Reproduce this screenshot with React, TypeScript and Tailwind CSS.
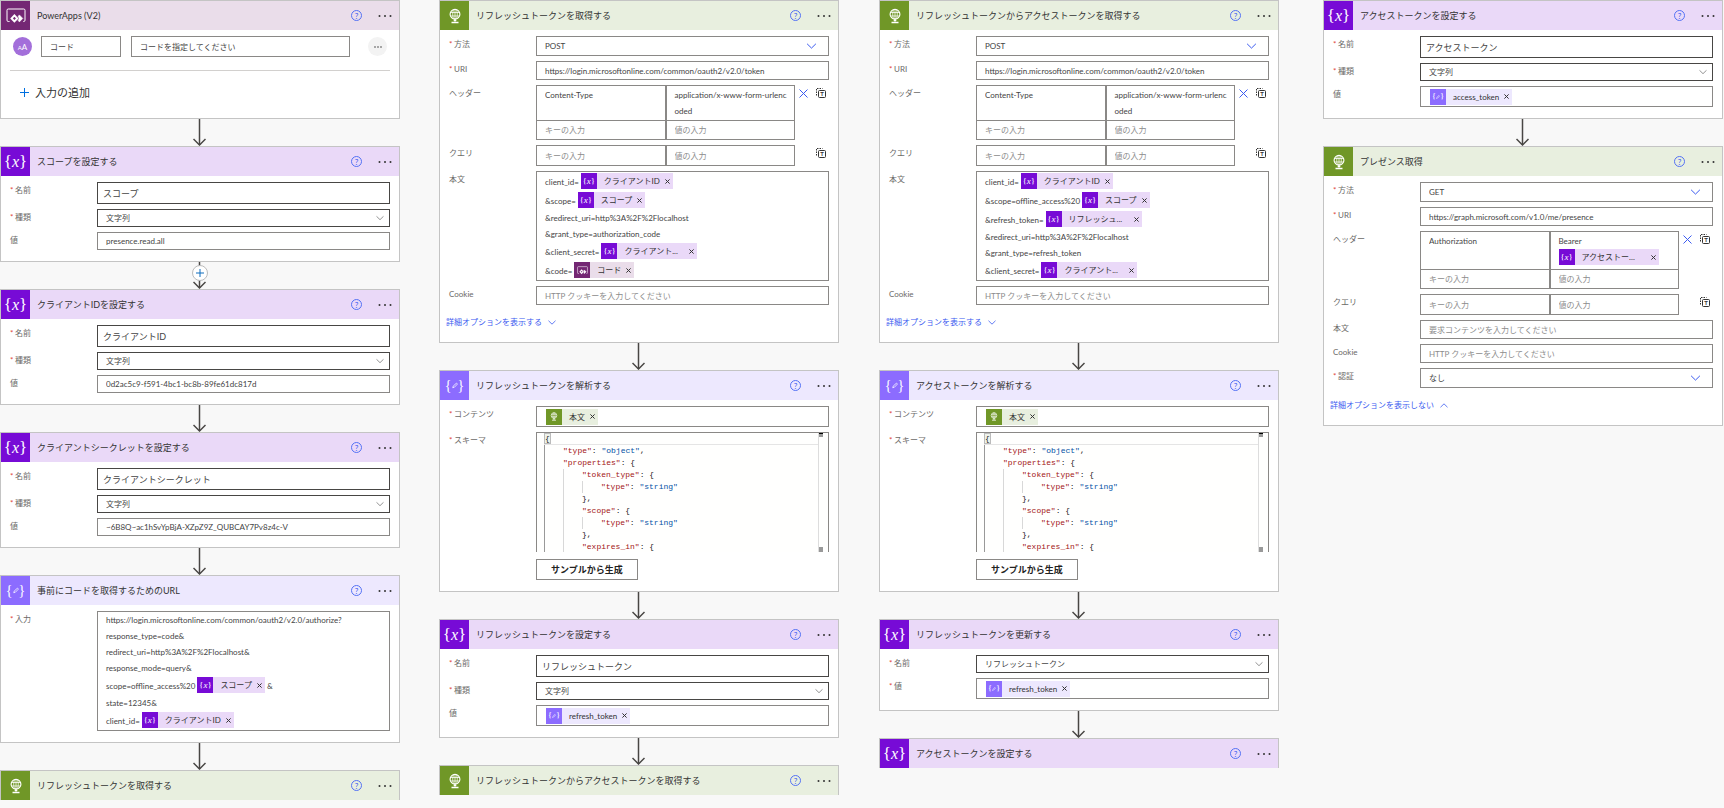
import { useId } from 'react';
import type { ReactNode } from 'react';
import { clsx } from 'clsx';

type Kind = 'powerapps' | 'variable' | 'data' | 'http';

const iconBg: Record<Kind, string> = {
  powerapps: 'bg-[#742774]',
  variable: 'bg-[#770bd6]',
  data: 'bg-[#8c6cff]',
  http: 'bg-[#709727]',
};

const headerBg: Record<Kind, string> = {
  powerapps: 'bg-[#eaddea]',
  variable: 'bg-[#ead9f8]',
  data: 'bg-[#ede8fe]',
  http: 'bg-[#e8efdf]',
};

const fieldText = 'text-[8px] text-[#444] outline-none placeholder:text-[#8c8c8c]';

function Glyph({ kind, small }: { kind: Kind; small?: boolean }) {
  const brace = clsx("font-['Liberation_Serif',serif] leading-none", small ? 'text-[9px]' : 'text-[17px]');

  if (kind === 'variable') {
    return (
      <span className={clsx(brace, 'flex items-center')}>
        {'{'}
        <i className={small ? 'text-[9px]' : 'text-[16px]'}>x</i>
        {'}'}
      </span>
    );
  }
  if (kind === 'data') {
    return (
      <span className={clsx(brace, 'flex items-center')}>
        {small ? '{' : <span className="text-[14px]">{'{'}</span>}
        <svg viewBox="0 0 8 8" className={small ? 'w-1 h-1' : 'w-[6px] h-[7px]'} fill="none" stroke="currentColor">
          <path d="M1 7l.6-2.2L6 .8l1.3 1.3-4.2 4.3z" />
        </svg>
        {small ? '}' : <span className="text-[14px]">{'}'}</span>}
      </span>
    );
  }
  if (kind === 'http') {
    return (
      <svg viewBox="0 0 16 18" className={small ? 'w-2 h-[9px]' : 'w-[14px] h-4'} fill="none" stroke="currentColor">
        <circle cx="8" cy="7" r="5.6" strokeWidth="1.3" />
        <ellipse cx="8" cy="7" rx="2.6" ry="5.6" strokeWidth="0.9" />
        <path d="M3 5h10M3 9h10M8 1.4v15" strokeWidth="0.9" />
        <path d="M4 16.4h8M6.5 14h3" strokeWidth="1.5" />
      </svg>
    );
  }
  return (
    <svg viewBox="0 0 20 16" className={small ? 'w-[11px] h-[9px]' : 'w-5 h-4'} fill="none" stroke="currentColor">
      <path d="M3.5 13.5H2.3A1.3 1.3 0 0 1 1 12.2V2.3A1.3 1.3 0 0 1 2.3 1h15.4A1.3 1.3 0 0 1 19 2.3v9.9a1.3 1.3 0 0 1-1.3 1.3h-.5" />
      <path d="M8.4 7.4l2.8 3-2.8 3-2.8-3z" strokeWidth="2" />
      <path d="M13.4 6.9l3.4 3.5-3.4 3.5-1.3-1.3 1-2.2-1-2.2z" fill="currentColor" strokeWidth="0.5" />
    </svg>
  );
}

function Chevron({ className, up }: { className?: string; up?: boolean }) {
  return (
    <svg viewBox="0 0 10 6" className={className} fill="none" stroke="currentColor">
      <path d={up ? 'M.6 5.2L5 .9l4.4 4.3' : 'M.6.8L5 5.1 9.4.8'} />
    </svg>
  );
}

function Card({ kind, title, children }: { kind: Kind; title: string; children?: ReactNode }) {
  return (
    <section className={clsx('border border-[#c4c4c4] bg-white', !children && 'border-b-0')}>
      <header className={clsx('flex items-center h-[29px]', headerBg[kind])}>
        <span className={clsx('flex items-center justify-center w-[29px] h-[29px] text-white', iconBg[kind])}>
          <Glyph kind={kind} />
        </span>
        <h2 className="flex-1 pl-[7px] text-[9px] leading-4 text-[#333]">{title}</h2>
        <button
          aria-label="ヘルプ"
          className="flex items-center justify-center w-[11px] h-[11px] rounded-full border border-[#5472f5] text-[8px] leading-none text-[#3b5bf0]"
        >
          ?
        </button>
        <button aria-label="メニュー" className="ml-4 mr-[7px] text-[#333]">
          <svg viewBox="0 0 14 4" className="w-[14px] h-1" fill="currentColor">
            <circle cx="1.5" cy="2" r="1" />
            <circle cx="7" cy="2" r="1" />
            <circle cx="12.5" cy="2" r="1" />
          </svg>
        </button>
      </header>
      {children}
    </section>
  );
}

function Fields({ children }: { children: ReactNode }) {
  return <div className="flex flex-col gap-[5px] pt-[6px] pb-[11px] pr-[9px]">{children}</div>;
}

function Row({ id, label, required, children }: { id?: string; label: string; required?: boolean; children: ReactNode }) {
  return (
    <div className="flex items-start">
      <label htmlFor={id} className="flex w-24 shrink-0 pl-[9px] text-[8px] leading-4 text-[#6b6967]">
        {required && <span className="w-[5px] text-[#e0433a]">*</span>}
        {label}
      </label>
      <div className="flex-1 min-w-0">{children}</div>
    </div>
  );
}

function NameField({ value }: { value: string }) {
  const id = useId();
  return (
    <Row id={id} label="名前" required>
      <input
        id={id}
        defaultValue={value}
        className="block w-full h-[22px] px-[5px] border border-[#484644] text-[9px] text-[#444] outline-none"
      />
    </Row>
  );
}

function TextField({ label, value, placeholder, required, tall }: {
  label: string;
  value?: string;
  placeholder?: string;
  required?: boolean;
  tall?: boolean;
}) {
  const id = useId();
  return (
    <Row id={id} label={label} required={required}>
      <input
        id={id}
        defaultValue={value}
        placeholder={placeholder}
        className={clsx('block w-full px-2 border border-[#8a8886]', fieldText, tall ? 'h-[19px]' : 'h-[18px]')}
      />
    </Row>
  );
}

function SelectField({ label, value, accent }: { label: string; value: string; accent?: boolean }) {
  const id = useId();
  return (
    <Row id={id} label={label} required>
      <div className="relative">
        <select
          id={id}
          defaultValue={value}
          className={clsx(
            'block w-full px-2 border appearance-none',
            fieldText,
            accent ? 'h-5 border-[#8a8886]' : 'h-[18px] border-[#484644]',
          )}
        >
          <option>{value}</option>
        </select>
        <Chevron
          className={clsx(
            'absolute top-1/2 -translate-y-1/2 pointer-events-none',
            accent ? 'right-3 w-[11px] h-[6px] text-[#3b5bf0]' : 'right-[6px] w-2 h-[5px] text-[#777]',
          )}
        />
      </div>
    </Row>
  );
}

function Chip({ kind, label, className }: { kind: Kind; label: string; className?: string }) {
  return (
    <span className={clsx('inline-flex items-center h-4 text-[8px] leading-4 text-[#333]', headerBg[kind])}>
      <span className={clsx('flex items-center justify-center w-4 h-4 mr-[7px] text-white', iconBg[kind])}>
        <Glyph kind={kind} small />
      </span>
      <span className={className}>{label}</span>
      <button aria-label={`${label} を削除`} className="ml-[5px] mr-[3px]">
        <svg viewBox="0 0 5 5" className="w-[5px] h-[5px]" stroke="currentColor">
          <path d="M.4.4l4.2 4.2M4.6.4L.4 4.6" />
        </svg>
      </button>
    </span>
  );
}

function ChipField({ label, required, children }: { label: string; required?: boolean; children: ReactNode }) {
  return (
    <Row label={label} required={required}>
      <div className="flex items-center h-[21px] px-[9px] border border-[#8a8886]">{children}</div>
    </Row>
  );
}

function BodyField({ label, required, children }: { label: string; required?: boolean; children: ReactNode }) {
  return (
    <Row label={label} required={required}>
      <div className="px-2 border border-[#8a8886] text-[8px] text-[#444]">{children}</div>
    </Row>
  );
}

function Line({ text, chip, after }: { text: string; chip?: ReactNode; after?: string }) {
  if (!chip) return <p className="leading-4">{text}</p>;
  return (
    <p className="flex items-start h-[19px] pt-px gap-[2px] leading-[18px]">
      <span>{text}</span>
      {chip}
      {after && <span>{after}</span>}
    </p>
  );
}

function PairField({ label, name, children }: { label: string; name?: string; children?: ReactNode }) {
  return (
    <Row label={label}>
      <div className="flex items-start">
        <div className="grid grid-cols-2 flex-1 border border-[#8a8886]">
          {name && (
            <>
              <div className="border-r border-[#8a8886]">
                <input aria-label="キー" defaultValue={name} className={clsx('block w-full h-[18px] px-2', fieldText)} />
              </div>
              <div className="border-l border-[#8a8886] text-[8px]">{children}</div>
            </>
          )}
          <input
            aria-label="キーの入力"
            placeholder="キーの入力"
            className={clsx('block w-full h-[19px] px-2 border-r border-[#8a8886]', fieldText, name && 'border-t')}
          />
          <input
            aria-label="値の入力"
            placeholder="値の入力"
            className={clsx('block w-full h-[19px] px-2 border-l border-[#8a8886]', fieldText, name && 'border-t')}
          />
        </div>
        <div className="flex items-center justify-end gap-2 w-[34px] pt-[3px] pr-[3px]">
          {name && (
            <button aria-label="削除" className="text-[#3b5bf0]">
              <svg viewBox="0 0 9 9" className="w-[9px] h-[9px]" stroke="currentColor">
                <path d="M.5.5l8 8M8.5.5l-8 8" />
              </svg>
            </button>
          )}
          <button aria-label="テキスト モードに切り替える" className="text-[#333]">
            <svg viewBox="0 0 10 10" className="w-[10px] h-[10px]" fill="none" stroke="currentColor">
              <path d="M.5 7.5v-7h6" strokeDasharray="1.5 1" />
              <rect x="2.5" y="2.5" width="7" height="7" rx="1" />
              <text x="6" y="8.4" textAnchor="middle" fontSize="6" fontWeight="bold" fill="currentColor" stroke="none">
                T
              </text>
            </svg>
          </button>
        </div>
      </div>
    </Row>
  );
}

function AdvancedLink({ open }: { open?: boolean }) {
  return (
    <div className="flex items-end h-[21px] pl-[6px]">
      <a href="#advanced" className="flex items-center gap-[6px] text-[8px] leading-[18px] text-[#3b5bf0]">
        {open ? '詳細オプションを表示しない' : '詳細オプションを表示する'}
        <Chevron className="w-2 h-[5px]" up={open} />
      </a>
    </div>
  );
}

const schema: { indent: number; name?: string; value?: string; end: string }[] = [
  { indent: 1, name: 'type', value: 'object', end: ',' },
  { indent: 1, name: 'properties', end: '{' },
  { indent: 2, name: 'token_type', end: '{' },
  { indent: 3, name: 'type', value: 'string', end: '' },
  { indent: 2, end: '},' },
  { indent: 2, name: 'scope', end: '{' },
  { indent: 3, name: 'type', value: 'string', end: '' },
  { indent: 2, end: '},' },
  { indent: 2, name: 'expires_in', end: '{' },
];

function SchemaField() {
  return (
    <>
      <Row label="スキーマ" required>
        <div className="flex h-[120px] overflow-hidden border border-b-0 border-[#8a8886] bg-[#fffffe]">
          <div className="flex-1 pl-[7px] font-['Liberation_Mono',monospace] text-[8px] leading-3 text-[#222] whitespace-pre">
            <div className="h-3 border-b border-[#e5e5e5] leading-[11px]">
              <span className="inline-block h-[11px] border border-[#bbb] bg-[#eef2ea] leading-[9px]">{'{'}</span>
            </div>
            {schema.map((line, i) => (
              <div key={i} className="flex h-3">
                {Array.from({ length: line.indent }, (_, level) => (
                  <span key={level} className={clsx('w-[19px] border-l', level === 0 ? 'border-[#999]' : 'border-[#d8d8d8]')} />
                ))}
                {line.name && <span className="text-[#a31515]">"{line.name}"</span>}
                {line.name && ': '}
                {line.value && <span className="text-[#0451a5]">"{line.value}"</span>}
                {line.end}
              </div>
            ))}
          </div>
          <div className="flex flex-col justify-between w-[10px] border-l border-[#ddd]">
            <span className="w-1 h-1 border-t border-black bg-[#999]" />
            <span className="w-1 h-[5px] bg-[#999]" />
          </div>
        </div>
      </Row>
      <button className="self-start ml-24 mt-[2px] h-[21px] px-[14px] border border-[#8a8886] text-[9px] leading-none font-bold text-[#222]">
        サンプルから生成
      </button>
    </>
  );
}

function Arrow({ insert }: { insert?: boolean }) {
  return (
    <div className="relative flex justify-center h-[27px] pr-px">
      <svg viewBox="0 0 13 27" className="w-[13px] h-[27px]" fill="none" stroke="#484644">
        <path d="M6.5 0v26" strokeWidth="1.5" />
        <path d="M.5 20l6 6 6-6" strokeWidth="1.5" />
      </svg>
      {insert && (
        <button
          aria-label="新しいステップの挿入"
          className="absolute top-[3px] flex items-center justify-center w-4 h-4 rounded-full border border-[#bbb] bg-white text-[#0f6cbd]"
        >
          <svg viewBox="0 0 8 8" className="w-2 h-2" stroke="currentColor">
            <path d="M4 0v8M0 4h8" />
          </svg>
        </button>
      )}
    </div>
  );
}

function VariableCard({ title, name, value }: { title: string; name: string; value: ReactNode }) {
  return (
    <Card kind="variable" title={title}>
      <Fields>
        <NameField value={name} />
        <SelectField label="種類" value="文字列" />
        {typeof value === 'string' ? <TextField label="値" value={value} /> : <ChipField label="値">{value}</ChipField>}
      </Fields>
    </Card>
  );
}

function TokenRequestCard({ title, children }: { title: string; children: ReactNode }) {
  return (
    <Card kind="http" title={title}>
      <Fields>
        <SelectField label="方法" value="POST" accent />
        <TextField label="URI" value="https://login.microsoftonline.com/common/oauth2/v2.0/token" required tall />
        <PairField label="ヘッダー" name="Content-Type">
          <textarea
            aria-label="値"
            defaultValue="application/x-www-form-urlencoded"
            className={clsx('block w-full h-[34px] pt-px pl-2 pr-1 leading-4 resize-none overflow-hidden break-all', fieldText)}
          />
        </PairField>
        <PairField label="クエリ" />
        <BodyField label="本文">{children}</BodyField>
        <TextField label="Cookie" placeholder="HTTP クッキーを入力してください" tall />
        <AdvancedLink />
      </Fields>
    </Card>
  );
}

function ParseCard({ title }: { title: string }) {
  return (
    <Card kind="data" title={title}>
      <Fields>
        <ChipField label="コンテンツ" required>
          <Chip kind="http" label="本文" />
        </ChipField>
        <SchemaField />
      </Fields>
    </Card>
  );
}

function TriggerCard() {
  return (
    <Card kind="powerapps" title="PowerApps (V2)">
      <div className="px-[9px] pt-[6px] pb-[5px]">
        <div className="flex items-center h-[21px] px-[3px] mb-[13px]">
          <span className="flex items-center justify-center w-[19px] h-[19px] rounded-full bg-[#a36fda] text-white leading-none">
            <span className="text-[6px] pt-[2px]">A</span>
            <span className="text-[8px]">A</span>
          </span>
          <input
            aria-label="入力の名前"
            defaultValue="コード"
            className={clsx('w-20 h-[21px] ml-[9px] px-2 border border-[#8a8886]', fieldText)}
          />
          <input
            aria-label="入力の説明"
            defaultValue="コードを指定してください"
            className={clsx('flex-1 min-w-0 h-[21px] ml-[10px] mr-[18px] px-2 border border-[#8a8886]', fieldText)}
          />
          <button aria-label="その他" className="flex items-center justify-center w-[19px] h-[19px] rounded-full bg-[#f3f3f3] text-[#444]">
            <svg viewBox="0 0 8 2" className="w-2 h-[2px]" fill="currentColor">
              <circle cx="1" cy="1" r=".8" />
              <circle cx="4" cy="1" r=".8" />
              <circle cx="7" cy="1" r=".8" />
            </svg>
          </button>
        </div>
        <hr className="border-[#d2d0ce]" />
        <button className="flex items-center gap-[6px] h-[42px] pl-[10px] text-[11px] leading-none text-[#333]">
          <svg viewBox="0 0 9 9" className="w-[9px] h-[9px] text-[#0070e0]" stroke="currentColor">
            <path d="M4.5 0v9M0 4.5h9" />
          </svg>
          入力の追加
        </button>
      </div>
    </Card>
  );
}

export default function App() {
  return (
    <main className="flex items-start min-h-screen pr-px bg-[#f8f8f8] font-['Lato','Noto_Sans_CJK_JP',sans-serif]">
      <div className="flex-1 min-w-0">
        <TriggerCard />
        <Arrow />
        <VariableCard title="スコープを設定する" name="スコープ" value="presence.read.all" />
        <Arrow insert />
        <VariableCard title="クライアントIDを設定する" name="クライアントID" value="0d2ac5c9-f591-4bc1-bc8b-89fe61dc817d" />
        <Arrow />
        <VariableCard
          title="クライアントシークレットを設定する"
          name="クライアントシークレット"
          value="~6B8Q~ac1hSvYpBjA-XZpZ9Z_QUBCAY7Pv8z4c-V"
        />
        <Arrow />
        <Card kind="data" title="事前にコードを取得するためのURL">
          <Fields>
            <BodyField label="入力" required>
              <Line text="https://login.microsoftonline.com/common/oauth2/v2.0/authorize?" />
              <Line text="response_type=code&" />
              <Line text="redirect_uri=http%3A%2F%2Flocalhost&" />
              <Line text="response_mode=query&" />
              <Line text="scope=offline_access%20" chip={<Chip kind="variable" label="スコープ" />} after="&" />
              <Line text="state=12345&" />
              <Line text="client_id=" chip={<Chip kind="variable" label="クライアントID" />} />
            </BodyField>
          </Fields>
        </Card>
        <Arrow />
        <Card kind="http" title="リフレッシュトークンを取得する" />
      </div>

      <div className="flex-1 min-w-0 ml-[39px]">
        <TokenRequestCard title="リフレッシュトークンを取得する">
          <Line text="client_id=" chip={<Chip kind="variable" label="クライアントID" />} />
          <Line text="&scope=" chip={<Chip kind="variable" label="スコープ" />} />
          <Line text="&redirect_uri=http%3A%2F%2Flocalhost" />
          <Line text="&grant_type=authorization_code" />
          <Line text="&client_secret=" chip={<Chip kind="variable" label="クライアント..." className="w-[60px]" />} />
          <Line text="&code=" chip={<Chip kind="powerapps" label="コード" />} />
        </TokenRequestCard>
        <Arrow />
        <ParseCard title="リフレッシュトークンを解析する" />
        <Arrow />
        <VariableCard
          title="リフレッシュトークンを設定する"
          name="リフレッシュトークン"
          value={<Chip kind="data" label="refresh_token" />}
        />
        <Arrow />
        <Card kind="http" title="リフレッシュトークンからアクセストークンを取得する" />
      </div>

      <div className="flex-1 min-w-0 ml-10">
        <TokenRequestCard title="リフレッシュトークンからアクセストークンを取得する">
          <Line text="client_id=" chip={<Chip kind="variable" label="クライアントID" />} />
          <Line text="&scope=offline_access%20" chip={<Chip kind="variable" label="スコープ" />} />
          <Line text="&refresh_token=" chip={<Chip kind="variable" label="リフレッシュ..." className="w-[60px]" />} />
          <Line text="&redirect_uri=http%3A%2F%2Flocalhost" />
          <Line text="&grant_type=refresh_token" />
          <Line text="&client_secret=" chip={<Chip kind="variable" label="クライアント..." className="w-[60px]" />} />
        </TokenRequestCard>
        <Arrow />
        <ParseCard title="アクセストークンを解析する" />
        <Arrow />
        <Card kind="variable" title="リフレッシュトークンを更新する">
          <Fields>
            <SelectField label="名前" value="リフレッシュトークン" />
            <ChipField label="値" required>
              <Chip kind="data" label="refresh_token" />
            </ChipField>
          </Fields>
        </Card>
        <Arrow />
        <Card kind="variable" title="アクセストークンを設定する" />
      </div>

      <div className="flex-1 min-w-0 ml-11">
        <VariableCard
          title="アクセストークンを設定する"
          name="アクセストークン"
          value={<Chip kind="data" label="access_token" />}
        />
        <Arrow />
        <Card kind="http" title="プレゼンス取得">
          <Fields>
            <SelectField label="方法" value="GET" accent />
            <TextField label="URI" value="https://graph.microsoft.com/v1.0/me/presence" required tall />
            <PairField label="ヘッダー" name="Authorization">
              <div className="px-2 pt-px pb-1 text-[#444]">
                <p className="leading-4">Bearer</p>
                <p className="flex">
                  <Chip kind="variable" label="アクセストー..." className="w-16" />
                </p>
              </div>
            </PairField>
            <PairField label="クエリ" />
            <TextField label="本文" placeholder="要求コンテンツを入力してください" tall />
            <TextField label="Cookie" placeholder="HTTP クッキーを入力してください" tall />
            <SelectField label="認証" value="なし" accent />
            <AdvancedLink open />
          </Fields>
        </Card>
      </div>
    </main>
  );
}
